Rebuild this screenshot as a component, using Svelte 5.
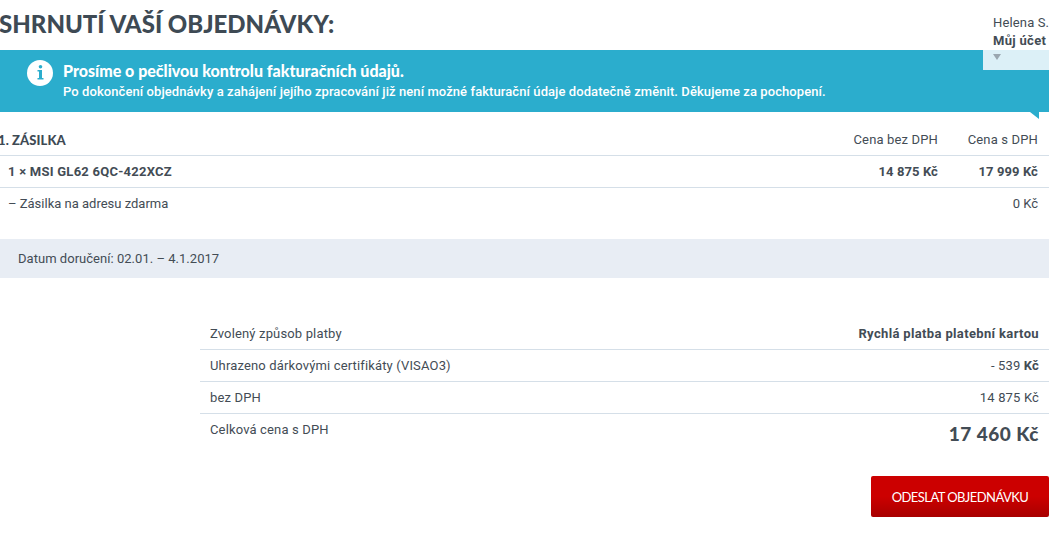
<script>
  const shipment = [
    { name: '1 × MSI GL62 6QC-422XCZ', net: '14 875 Kč', gross: '17 999 Kč', strong: true },
    { name: '– Zásilka na adresu zdarma', net: '', gross: '0 Kč', strong: false }
  ];
</script>

<div class="page">
  <h1>SHRNUTÍ VAŠÍ OBJEDNÁVKY:</h1>

  <div class="notice">
    <svg class="notice-icon" viewBox="0 0 26 26" width="26" height="26" aria-hidden="true">
      <circle cx="13" cy="13" r="13" fill="#fff" />
      <circle cx="13.5" cy="6.8" r="1.8" fill="#2badcd" />
      <path d="M10.5 10h4.5v8h1.5v1.5h-6V18H12v-6.5h-1.5z" fill="#2badcd" />
    </svg>
    <div>
      <div class="notice-title">Prosíme o pečlivou kontrolu fakturačních údajů.</div>
      <div class="notice-text">Po dokončení objednávky a zahájení jejího zpracování již není možné fakturační údaje dodatečně změnit. Děkujeme za pochopení.</div>
    </div>
    <span class="notice-tip"></span>
  </div>

  <div class="account">
    <div class="account-name">Helena S.</div>
    <div class="account-link">Můj účet</div>
    <div class="account-drop"><span class="caret"></span></div>
  </div>

  <div class="shipment-head">
    <div class="shipment-title">1. ZÁSILKA</div>
    <div class="col-net">Cena bez DPH</div>
    <div class="col-gross">Cena s DPH</div>
  </div>

  {#each shipment as row}
    <div class="shipment-row" class:strong={row.strong}>
      <div class="shipment-name">{row.name}</div>
      <div class="col-net">{row.net}</div>
      <div class="col-gross">{row.gross}</div>
    </div>
  {/each}

  <div class="delivery">Datum doručení: 02.01. – 4.1.2017</div>

  <div class="summary">
    <div class="summary-row">
      <span>Zvolený způsob platby</span>
      <strong>Rychlá platba platební kartou</strong>
    </div>
    <div class="summary-row">
      <span>Uhrazeno dárkovými certifikáty (VISAO3)</span>
      <span>- 539 <b>Kč</b></span>
    </div>
    <div class="summary-row">
      <span>bez DPH</span>
      <span>14 875 Kč</span>
    </div>
    <div class="summary-row total">
      <span>Celková cena s DPH</span>
      <span class="total-price">17 460 Kč</span>
    </div>
  </div>

  <div class="actions">
    <button type="button" class="submit">ODESLAT OBJEDNÁVKU</button>
  </div>
</div>

<style>
  :global(body) {
    margin: 0;
    background: #fff;
    overflow: hidden;
  }

  .page {
    position: relative;
    width: 1049px;
    height: 556px;
    font-family: Roboto, "Liberation Sans", sans-serif;
    font-size: 13px;
    letter-spacing: 0.15px;
    color: #434c55;
  }

  h1 {
    margin: 0 0 0 -1px;
    height: 50px;
    line-height: 48px;
    font-family: Lato, sans-serif;
    font-size: 24px;
    font-weight: 900;
    letter-spacing: 0;
    color: #3e4a54;
  }

  .account {
    position: absolute;
    top: 14px;
    right: 0;
    width: 66px;
  }

  .account-name,
  .account-link {
    padding-left: 10px;
    height: 18px;
    line-height: 18px;
    white-space: nowrap;
  }

  .account-link {
    font-weight: 700;
    letter-spacing: 0.3px;
  }

  .account-drop {
    height: 20px;
    padding-left: 10px;
    background: #dcf0f7;
  }

  .caret {
    display: block;
    width: 0;
    height: 0;
    border-left: 4px solid transparent;
    border-right: 4px solid transparent;
    border-top: 6px solid #9aa7b0;
    position: relative;
    top: 4px;
  }

  .notice {
    position: relative;
    display: flex;
    align-items: flex-start;
    gap: 10px;
    height: 62px;
    box-sizing: border-box;
    padding: 10px 0 0 27px;
    background: #2badcd;
    color: #fff;
  }

  .notice-title {
    font-family: Lato, sans-serif;
    font-size: 16px;
    font-weight: 900;
    letter-spacing: 0;
    line-height: 21px;
  }

  .notice-text {
    margin-top: 2px;
    font-weight: 500;
    line-height: 18px;
    font-size: 13px;
    letter-spacing: 0.08px;
  }

  .notice-tip {
    position: absolute;
    right: 10px;
    bottom: -7px;
    width: 0;
    height: 0;
    border-top: 7px solid #2badcd;
    border-left: 9px solid transparent;
  }

  .shipment-head,
  .shipment-row {
    display: flex;
    align-items: center;
    height: 32px;
    box-sizing: border-box;
    border-bottom: 1px solid #d5dfe8;
  }

  .shipment-head {
    height: 44px;
    padding-top: 12px;
  }

  .shipment-row:not(.strong) {
    border-bottom: 0;
    padding-bottom: 2px;
    letter-spacing: 0;
  }

  .shipment-title {
    flex: 1;
    margin-left: -2px;
    font-family: Lato, sans-serif;
    font-size: 13px;
    font-weight: 900;
    letter-spacing: 0.1px;
    color: #3e4a54;
  }

  .shipment-name {
    flex: 1;
    padding-left: 8px;
  }

  .strong {
    font-weight: 700;
    letter-spacing: 0.1px;
  }

  .strong .shipment-name {
    letter-spacing: 0.25px;
  }

  .col-net {
    width: 120px;
    text-align: right;
  }

  .col-gross {
    width: 100px;
    padding-right: 11px;
    text-align: right;
  }

  .delivery {
    margin-top: 19px;
    height: 39px;
    line-height: 39px;
    padding-left: 18px;
    background: #e8edf4;
    letter-spacing: 0.03px;
  }

  .summary {
    margin: 40px 0 0 200px;
  }

  .summary-row {
    display: flex;
    justify-content: space-between;
    align-items: center;
    height: 32px;
    box-sizing: border-box;
    padding: 0 10px;
    border-bottom: 1px solid #d5dfe8;
  }

  .summary-row strong {
    letter-spacing: 0.35px;
  }

  .total {
    height: 42px;
    align-items: flex-start;
    padding-top: 8px;
    border-bottom: 0;
  }

  .total-price {
    font-family: Lato, sans-serif;
    font-size: 19px;
    font-weight: 900;
    letter-spacing: 0.5px;
    line-height: 24px;
  }

  .actions {
    display: flex;
    justify-content: flex-end;
    margin-top: 20px;
  }

  .submit {
    width: 178px;
    height: 41px;
    padding: 0;
    border: 0;
    border-radius: 2px;
    background: linear-gradient(#cc0000 50%, #a80000);
    color: #fff;
    font-family: Lato, sans-serif;
    font-size: 13px;
    letter-spacing: -0.55px;
  }
</style>
